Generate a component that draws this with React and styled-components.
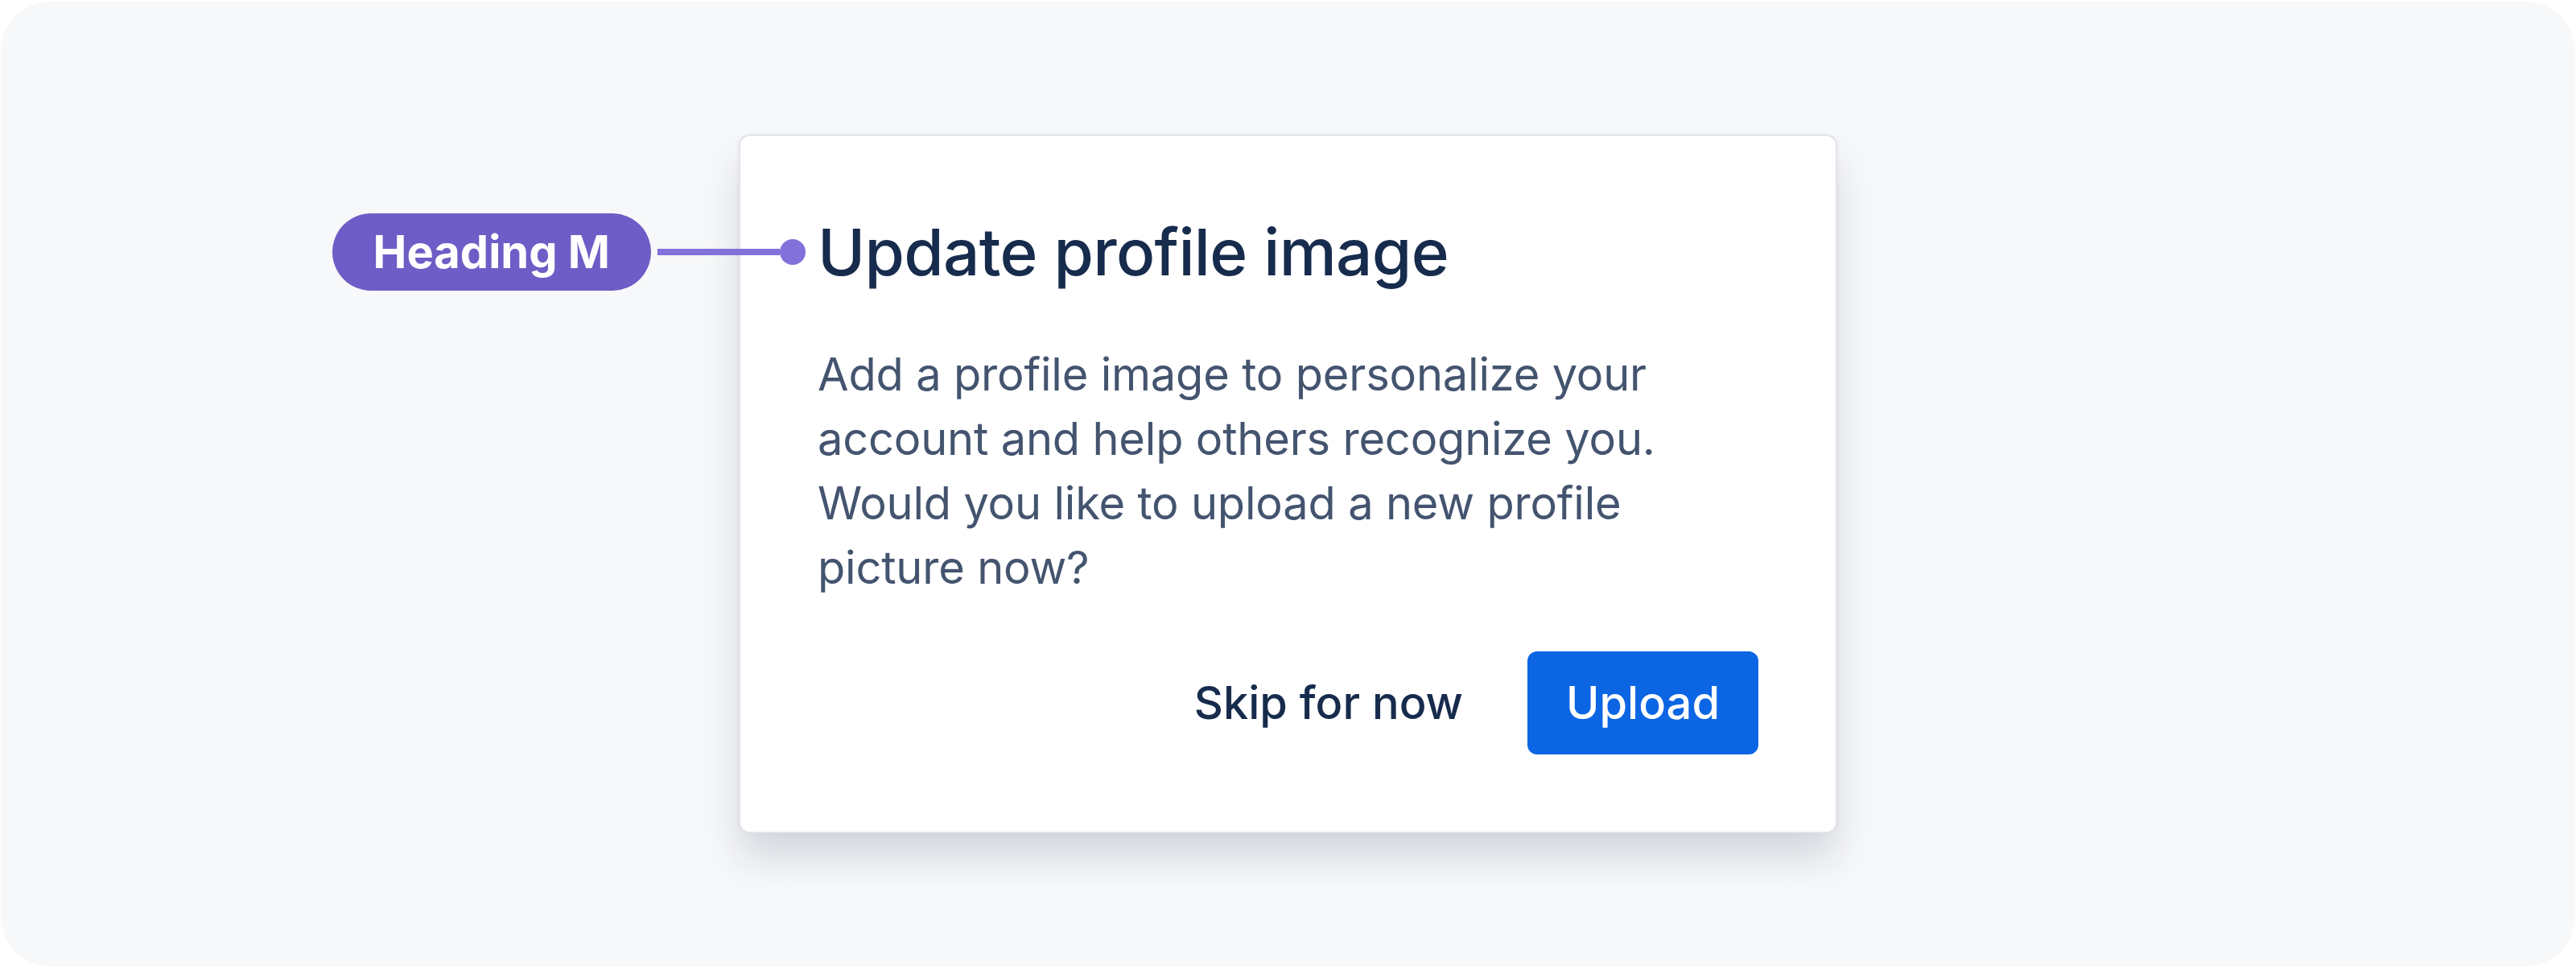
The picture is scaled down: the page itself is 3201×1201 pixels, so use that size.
import styled, { createGlobalStyle } from "styled-components";

const GlobalStyle = createGlobalStyle`
  html, body {
    margin: 0;
    padding: 0;
    background: #ffffff;
  }
  body {
    font-family: Inter, "Noto Sans", sans-serif;
    -webkit-font-smoothing: antialiased;
  }
`;

export default function App() {
  return (
    <>
      <GlobalStyle />
      <Page>
        <Canvas>
          <Modal>
            <HeadingRow>
              <Annotation>
                <Pill>Heading M</Pill>
                <Leader />
                <Dot />
              </Annotation>
              <Heading>Update profile image</Heading>
            </HeadingRow>
            <Body>
              Add a profile image to personalize your account and help others
              recognize you. Would you like to upload a new profile picture now?
            </Body>
            <Footer>
              <Button>Skip for now</Button>
              <Button primary>Upload</Button>
            </Footer>
          </Modal>
        </Canvas>
      </Page>
    </>
  );
}

//#region styled components
const Page = styled.div`
  width: 3201px;
  height: 1201px;
  box-sizing: border-box;
  padding: 2px 1px 1px 1px;
  display: flex;
`;

const Canvas = styled.div`
  flex: 1;
  background: #f7f8f9;
  border-radius: 62px;
  display: flex;
  align-items: center;
  justify-content: center;
`;

const Modal = styled.div`
  width: 1361px;
  box-sizing: border-box;
  padding: 96px;
  background: #ffffff;
  border-radius: 12px;
  box-shadow: 0 0 0 2px #e2e4e9, 0 32px 48px rgba(9, 30, 66, 0.15),
    0 0 6px rgba(9, 30, 66, 0.1);
  display: flex;
  flex-direction: column;
`;

const HeadingRow = styled.div`
  position: relative;
  display: flex;
  align-items: center;
`;

const Heading = styled.h1`
  margin: 0;
  font-size: 80px;
  line-height: 96px;
  font-weight: 500;
  color: #172b4d;
  letter-spacing: -0.7px;
`;

const Annotation = styled.div`
  position: absolute;
  right: calc(100% + 15px);
  top: 50%;
  transform: translateY(-50%);
  display: flex;
  align-items: center;
`;

const Pill = styled.span`
  height: 96px;
  padding: 0 51px;
  border-radius: 48px;
  background: #6e5dc6;
  color: #ffffff;
  font-size: 56px;
  font-weight: 700;
  display: flex;
  align-items: center;
  white-space: nowrap;
`;

const Leader = styled.span`
  width: 152px;
  height: 8px;
  margin-left: 8px;
  background: #8270db;
`;

const Dot = styled.span`
  width: 32px;
  height: 32px;
  border-radius: 50%;
  background: #8270db;
`;

const Body = styled.p`
  margin: 64px 0 0;
  font-size: 56px;
  line-height: 80px;
  color: #44546f;
  letter-spacing: -0.2px;
`;

const Footer = styled.div`
  margin-top: 64px;
  display: flex;
  justify-content: flex-end;
  gap: 32px;
`;

const Button = styled.button`
  height: 128px;
  padding: 0 48px;
  border: none;
  border-radius: 12px;
  font-family: inherit;
  font-size: 56px;
  font-weight: 500;
  background: ${({ primary }) => (primary ? "#0c66e4" : "transparent")};
  color: ${({ primary }) => (primary ? "#ffffff" : "#172b4d")};
  cursor: pointer;
`;
//#endregion
